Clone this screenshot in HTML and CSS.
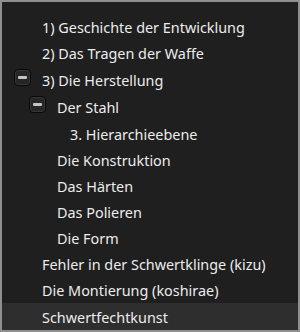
FILE: index.html
```html
<!DOCTYPE html>
<html lang="de">
<head>
<meta charset="utf-8">
<link rel="stylesheet" href="styles.css">
</head>
<body>
<div class="tree">
  <ul class="list">
    <li class="row lvl0"><span class="slot"></span><span class="label">1) Geschichte der Entwicklung</span></li>
    <li class="row lvl0"><span class="slot"></span><span class="label">2) Das Tragen der Waffe</span></li>
    <li class="row lvl0 parent"><span class="slot"><span class="toggle"><span class="bar"></span></span></span><span class="label">3) Die Herstellung</span></li>
    <li class="row lvl1 parent"><span class="slot"><span class="toggle"><span class="bar"></span></span></span><span class="label">Der Stahl</span></li>
    <li class="row lvl2"><span class="slot"></span><span class="label">3. Hierarchieebene</span></li>
    <li class="row lvl1"><span class="slot"></span><span class="label">Die Konstruktion</span></li>
    <li class="row lvl1"><span class="slot"></span><span class="label">Das Härten</span></li>
    <li class="row lvl1"><span class="slot"></span><span class="label">Das Polieren</span></li>
    <li class="row lvl1"><span class="slot"></span><span class="label">Die Form</span></li>
    <li class="row lvl0"><span class="slot"></span><span class="label">Fehler in der Schwertklinge (kizu)</span></li>
    <li class="row lvl0"><span class="slot"></span><span class="label">Die Montierung (koshirae)</span></li>
    <li class="row lvl0 selected"><span class="slot"></span><span class="label">Schwertfechtkunst</span></li>
  </ul>
</div>
</body>
</html>
```
FILE: styles.css
```css
html, body {
  margin: 0;
  padding: 0;
  background: #1f1f1f;
}
.tree {
  width: 300px;
  height: 332px;
  box-sizing: border-box;
  border: 2px solid #8f8f8f;
  background: #1f1f1f;
  overflow: hidden;
  font-family: "Noto Sans", sans-serif;
  font-size: 14.4px;
  color: #ececec;
}
.list {
  list-style: none;
  margin: 0;
  padding: 12.3px 0 0 0;
}
.row {
  display: flex;
  align-items: center;
  height: 26px;
  white-space: nowrap;
}
.row.parent {
  height: 27.5px;
}
.lvl0 { padding-left: 12px; }
.lvl1 { padding-left: 27px; }
.lvl2 { padding-left: 40px; }
.slot {
  width: 28px;
  flex: none;
  display: flex;
  align-items: center;
}
.toggle {
  width: 15px;
  height: 15px;
  margin-bottom: 6px;
  border: 1px solid #090909;
  border-radius: 4px;
  background: #262626;
  box-shadow: inset 0 0 0 1px #363636;
  display: flex;
  align-items: center;
  justify-content: center;
}
.bar {
  width: 9px;
  height: 3px;
  background: #c4c4c4;
  border-radius: 1px;
}
.selected {
  background: #2e2e2e;
  height: 28px;
}
```
